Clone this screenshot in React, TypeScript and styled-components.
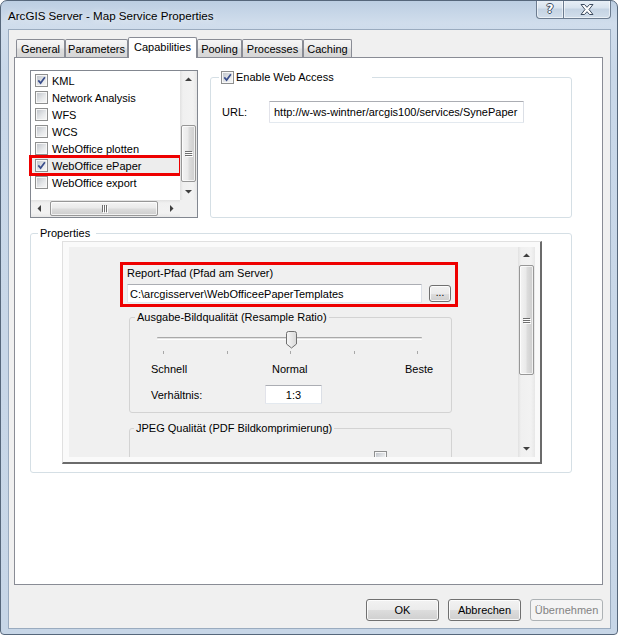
import React from 'react';
import styled, { createGlobalStyle, css } from 'styled-components';

type Dir = 'v' | 'h';

const GlobalStyle = createGlobalStyle`
  *, *::before, *::after { box-sizing: border-box; }
  html, body { margin: 0; padding: 0; background: #fff; }
  body {
    font-family: "Liberation Sans", Arial, sans-serif;
    font-size: 11px;
    color: #000;
  }
`;

const Window = styled.div`
  width: 618px;
  height: 635px;
  display: flex;
  flex-direction: column;
  border: 1px solid #56677b;
  border-radius: 7px 7px 4px 4px;
  background: linear-gradient(180deg, #bccee2 0px, #d0ddec 22px, #c9d8e9 70px, #c7d6e7 100%);
  overflow: hidden;
`;

const TitleBar = styled.div`
  height: 28px;
  flex: none;
  display: flex;
  align-items: flex-start;
  padding: 0 6px 0 7px;
`;

const Title = styled.div`
  flex: 1;
  align-self: center;
  font-size: 11.6px;
  color: #000;
  text-shadow: 0 0 6px rgba(255, 255, 255, 0.9);
`;

const CaptionButton = styled.div<{ $kind: 'help' | 'close' }>`
  height: 19px;
  margin-top: -1px;
  width: ${({ $kind }) => ($kind === 'help' ? 28 : 48)}px;
  margin-left: ${({ $kind }) => ($kind === 'close' ? -1 : 0)}px;
  border: 1px solid #6c7c90;
  border-top: none;
  border-radius: ${({ $kind }) => ($kind === 'help' ? '0 0 0 4px' : '0 0 4px 0')};
  background: linear-gradient(180deg, #e9f0f7 0%, #d8e3ee 45%, #c4d3e3 50%, #d2deeb 100%);
  box-shadow: inset 0 0 0 1px rgba(255, 255, 255, 0.55);
  display: flex;
  align-items: center;
  justify-content: center;
  font-family: "DejaVu Sans", sans-serif;
  font-weight: bold;
  font-size: 12px;
  color: #fff;
  text-shadow: 1px 0 0 #3e4c60, -1px 0 0 #3e4c60, 0 1px 0 #3e4c60, 0 -1px 0 #3e4c60;
`;

const Client = styled.div`
  flex: 1;
  margin: 0 6px 5px 7px;
  border: 1px solid #9aabbf;
  background: #f0f0f0;
  display: flex;
  flex-direction: column;
  padding: 7px 7px 0 5px;
`;

const TabStrip = styled.div`
  height: 20px;
  flex: none;
  display: flex;
  align-items: flex-end;
  padding-left: 2px;
  position: relative;
  z-index: 1;
`;

const Tab = styled.div<{ $active?: boolean; $w: number }>`
  width: ${({ $w }) => $w}px;
  height: ${({ $active }) => ($active ? 21 : 18)}px;
  margin-bottom: ${({ $active }) => ($active ? -1 : 0)}px;
  padding-bottom: ${({ $active }) => ($active ? 3 : 0)}px;
  border: 1px solid #898c95;
  border-bottom: none;
  border-radius: 2px 2px 0 0;
  background: ${({ $active }) =>
    $active ? '#fff' : 'linear-gradient(180deg, #f6f6f6 0%, #ececec 45%, #dedede 55%, #d6d6d6 100%)'};
  display: flex;
  align-items: center;
  justify-content: center;
  white-space: nowrap;
`;

const TabPage = styled.div`
  height: 528px;
  flex: none;
  border: 1px solid #898c95;
  background: #fff;
  padding: 12px 0 0 15px;
`;

const TopRow = styled.div`
  display: flex;
  gap: 12px;
  height: 148px;
`;

const ListBox = styled.div`
  width: 168px;
  border: 1px solid #828790;
  background: #fff;
  display: grid;
  grid-template-columns: 1fr 17px;
  grid-template-rows: 1fr 17px;
`;

const ListItems = styled.div`
  padding-top: 1px;
`;

const ListRow = styled.div<{ $marked?: boolean }>`
  height: 17px;
  display: flex;
  align-items: center;
  gap: 4px;
  padding-left: 4px;
  white-space: nowrap;
  ${({ $marked }) =>
    $marked &&
    css`
      background: #ededed;
      outline: 3px solid #ee0000;
      outline-offset: -1px;
    `}
`;

const Corner = styled.div`
  background: #f0f0f0;
`;

const BoxOuter = styled.span`
  width: 13px;
  height: 13px;
  flex: none;
  border: 1px solid #8e8f8f;
  padding: 1px;
  background: linear-gradient(135deg, #c2c6cc 0%, #e6e8ea 60%, #f5f5f5 100%) content-box, #f7f7f7;
  display: inline-flex;
  align-items: center;
  justify-content: center;

  svg {
    display: block;
  }
`;

const Group = styled.fieldset<{ $w?: number; $h?: number; $dim?: boolean }>`
  margin: 0;
  padding: 0;
  min-width: 0;
  border: 1px solid ${({ $dim }) => ($dim ? '#d3d3d3' : '#d5dfe5')};
  border-radius: 3px;
  ${({ $w }) => $w !== undefined && css`width: ${$w}px;`}
  ${({ $h }) => $h !== undefined && css`height: ${$h}px;`}
`;

const PropsGroup = styled(Group)`
  margin-top: 8px;
`;

const Legend = styled.legend<{ $ml: number; $pr?: number }>`
  margin-left: ${({ $ml }) => $ml}px;
  padding: 0 ${({ $pr }) => $pr ?? 2}px 0 2px;
  height: 14px;
  line-height: 14px;
  font-size: 11px;
  white-space: nowrap;
`;

const LegendInner = styled.span`
  display: inline-flex;
  align-items: center;
  gap: 2px;
  height: 14px;
`;

const WebBody = styled.div`
  padding: 17px 0 0 11px;
  display: flex;
  align-items: center;
`;

const FieldLabel = styled.span<{ $w: number }>`
  width: ${({ $w }) => $w}px;
  flex: none;
  white-space: nowrap;
`;

const TextBox = styled.div<{ $w: number; $h: number; $pl?: number; $center?: boolean }>`
  width: ${({ $w }) => $w}px;
  height: ${({ $h }) => $h}px;
  flex: none;
  border: 1px solid;
  border-color: #abadb3 #dbdfe6 #e3e9ef #e2e3ea;
  border-radius: 1px;
  background: #fff;
  display: flex;
  align-items: center;
  justify-content: ${({ $center }) => ($center ? 'center' : 'flex-start')};
  padding-left: ${({ $pl }) => $pl ?? 0}px;
  white-space: nowrap;
  overflow: hidden;
`;

const PropsGroupBody = styled.div`
  padding: 1px 0 0 31px;
`;

const Panel = styled.div`
  width: 480px;
  height: 223px;
  border-top: 1px solid #e0e0e0;
  border-left: 1px solid #e0e0e0;
  border-right: 2px solid #6b6b6b;
  border-bottom: 2px solid #6b6b6b;
  background: #fafafa;
  padding: 5px 5px 5px 6px;
  display: flex;
`;

const Viewport = styled.div`
  flex: 1;
  display: flex;
  background: #f0f0f0;
  overflow: hidden;
`;

const PanelContent = styled.div`
  flex: 1;
  display: flex;
  flex-direction: column;
  align-items: flex-start;
  padding-top: 15px;
  overflow: hidden;
`;

const ReportBox = styled.div`
  margin-left: 51px;
  width: 338px;
  border: 3px solid #ee0000;
  padding: 1px 0 1px 4px;
`;

const LabelLine = styled.div`
  height: 14px;
  line-height: 14px;
  white-space: nowrap;
`;

const PathRow = styled.div`
  margin-top: 4px;
  display: flex;
  align-items: center;
`;

const Button = styled.div<{ $w: number; $h: number; $disabled?: boolean }>`
  width: ${({ $w }) => $w}px;
  height: ${({ $h }) => $h}px;
  flex: none;
  border: 1px solid ${({ $disabled }) => ($disabled ? '#adb2b5' : '#707070')};
  border-radius: 3px;
  background: ${({ $disabled }) =>
    $disabled ? '#f4f4f4' : 'linear-gradient(180deg, #f2f2f2 0%, #ebebeb 50%, #dddddd 51%, #cfcfcf 100%)'};
  box-shadow: inset 0 0 0 1px ${({ $disabled }) => ($disabled ? '#f4f4f4' : 'rgba(255,255,255,0.8)')};
  color: ${({ $disabled }) => ($disabled ? '#838383' : '#000')};
  display: flex;
  align-items: center;
  justify-content: center;
  white-space: nowrap;
`;

const BrowseButton = styled(Button)`
  margin-left: 7px;
  font-size: 10px;
  padding-bottom: 2px;
`;

const InnerGroup = styled(Group)<{ $mt: number }>`
  margin-left: 60px;
  margin-top: ${({ $mt }) => $mt}px;
  flex: none;
`;

const QualityBody = styled.div`
  padding: 7px 0 8px 0;
`;

const Slider = styled.div`
  position: relative;
  margin-left: 27px;
  width: 265px;
  height: 24px;
  padding-top: 6px;
`;

const Track = styled.div`
  height: 3px;
  border-top: 1px solid #a9a9a9;
  border-bottom: 1px solid #fff;
  background: #e3e3e3;
  border-radius: 1px;
`;

const Ticks = styled.div`
  margin-top: 11px;
  display: flex;
  justify-content: space-between;
  padding: 0 4px 0 6px;
`;

const Tick = styled.span`
  width: 1px;
  height: 3px;
  background: #a8a8a8;
`;

const SliderThumb = styled.svg`
  position: absolute;
  left: 129px;
  top: 0;
`;

const ScaleRow = styled.div`
  margin-top: 7px;
  padding-left: 21px;
  display: flex;
  height: 14px;
  line-height: 14px;
`;

const ScaleLabel = styled.span<{ $w?: number }>`
  ${({ $w }) => $w !== undefined && css`width: ${$w}px;`}
  flex: none;
`;

const RatioRow = styled.div`
  margin-top: 9px;
  padding-left: 21px;
  display: flex;
  align-items: center;
`;

const JpegBody = styled.div`
  padding: 16px 0 0 244px;
`;

const ScrollBar = styled.div<{ $dir: Dir }>`
  display: flex;
  flex: none;
  flex-direction: ${({ $dir }) => ($dir === 'v' ? 'column' : 'row')};
  ${({ $dir }) => ($dir === 'v' ? css`width: 17px;` : css`height: 17px;`)}
  background: linear-gradient(
    ${({ $dir }) => ($dir === 'v' ? '90deg' : '180deg')},
    #e1e1e1 0px,
    #f0f0f0 3px,
    #f2f2f2 13px,
    #e7e7e7 17px
  );
`;

const ArrowCell = styled.div`
  width: 17px;
  height: 17px;
  flex: none;
  display: flex;
  align-items: center;
  justify-content: center;
`;

const ScrollFill = styled.div`
  flex: 1;
  display: flex;
  flex-direction: inherit;
`;

const ScrollThumb = styled.div<{ $dir: Dir; $offset: number; $len: number }>`
  flex: none;
  ${({ $dir, $offset, $len }) =>
    $dir === 'v'
      ? css`
          margin-top: ${$offset}px;
          height: ${$len}px;
          width: 15px;
          margin-left: 1px;
        `
      : css`
          margin-left: ${$offset}px;
          width: ${$len}px;
          height: 15px;
          margin-top: 1px;
        `}
  border: 1px solid #979797;
  border-radius: 2px;
  background: linear-gradient(
    ${({ $dir }) => ($dir === 'v' ? '90deg' : '180deg')},
    #f4f4f4 0%,
    #eaeaea 45%,
    #dcdcdc 55%,
    #cdcdcd 100%
  );
  box-shadow: inset 0 0 0 1px rgba(255, 255, 255, 0.7);
  display: flex;
  align-items: center;
  justify-content: center;
`;

const Grip = styled.div<{ $dir: Dir }>`
  display: flex;
  flex-direction: ${({ $dir }) => ($dir === 'v' ? 'column' : 'row')};
  gap: 1px;

  i {
    display: block;
    width: ${({ $dir }) => ($dir === 'v' ? 7 : 1)}px;
    height: ${({ $dir }) => ($dir === 'v' ? 1 : 7)}px;
    background: #6e6e6e;
    box-shadow: 1px 1px 0 #fff;
  }
`;

const ButtonRow = styled.div`
  margin-top: 14px;
  display: flex;
  justify-content: flex-end;
  gap: 9px;
`;

function Arrow({ rot }: { rot: number }) {
  return (
    <svg width="7" height="7" viewBox="0 0 7 7" style={{ transform: `rotate(${rot}deg)` }}>
      <polygon points="0,5 3.5,1.5 7,5" fill="#3f3f3f" />
    </svg>
  );
}

function Scroll({ dir, offset, len }: { dir: Dir; offset: number; len: number }) {
  const first = dir === 'v' ? 0 : -90;
  const last = dir === 'v' ? 180 : 90;
  return (
    <ScrollBar $dir={dir}>
      <ArrowCell>
        <Arrow rot={first} />
      </ArrowCell>
      <ScrollFill>
        <ScrollThumb $dir={dir} $offset={offset} $len={len}>
          <Grip $dir={dir}>
            <i />
            <i />
            <i />
          </Grip>
        </ScrollThumb>
      </ScrollFill>
      <ArrowCell>
        <Arrow rot={last} />
      </ArrowCell>
    </ScrollBar>
  );
}

function Check({ checked }: { checked?: boolean }) {
  return (
    <BoxOuter>
      {checked && (
        <svg width="9" height="9" viewBox="0 0 9 9">
          <path d="M1.3 4.4 L3.6 7.1 L7.9 1.3" fill="none" stroke="#3a4e8c" strokeWidth="1.7" />
        </svg>
      )}
    </BoxOuter>
  );
}

const capabilities = [
  { label: 'KML', checked: true },
  { label: 'Network Analysis' },
  { label: 'WFS' },
  { label: 'WCS' },
  { label: 'WebOffice plotten' },
  { label: 'WebOffice ePaper', checked: true, marked: true },
  { label: 'WebOffice export' },
];

const tabs = [
  { label: 'General', w: 49 },
  { label: 'Parameters', w: 63 },
  { label: 'Capabilities', w: 69, active: true },
  { label: 'Pooling', w: 45 },
  { label: 'Processes', w: 61 },
  { label: 'Caching', w: 49 },
];

export default function App() {
  return (
    <>
      <GlobalStyle />
      <Window>
        <TitleBar>
          <Title>ArcGIS Server - Map Service Properties</Title>
          <CaptionButton $kind="help">?</CaptionButton>
          <CaptionButton $kind="close">
            <svg width="14" height="11" viewBox="0 0 14 11">
              <polygon
                points="1,0.5 4.5,0.5 7,3.3 9.5,0.5 13,0.5 9,5.5 13,10.5 9.5,10.5 7,7.7 4.5,10.5 1,10.5 5,5.5"
                fill="#fff"
                stroke="#3e4c60"
                strokeWidth="1"
                strokeLinejoin="round"
              />
            </svg>
          </CaptionButton>
        </TitleBar>

        <Client>
          <TabStrip>
            {tabs.map(t => (
              <Tab key={t.label} $w={t.w} $active={t.active}>
                {t.label}
              </Tab>
            ))}
          </TabStrip>

          <TabPage>
            <TopRow>
              <ListBox>
                <ListItems>
                  {capabilities.map(c => (
                    <ListRow key={c.label} $marked={c.marked}>
                      <Check checked={c.checked} />
                      {c.label}
                    </ListRow>
                  ))}
                </ListItems>
                <Scroll dir="v" offset={37} len={57} />
                <Scroll dir="h" offset={2} len={108} />
                <Corner />
              </ListBox>

              <Group $w={362}>
                <Legend $ml={8} $pr={38}>
                  <LegendInner>
                    <Check checked />
                    Enable Web Access
                  </LegendInner>
                </Legend>
                <WebBody>
                  <FieldLabel $w={47}>URL:</FieldLabel>
                  <TextBox $w={255} $h={22} $pl={4}>
                    http://w-ws-wintner/arcgis100/services/SynePaper
                  </TextBox>
                </WebBody>
              </Group>
            </TopRow>

            <PropsGroup $w={542} $h={247}>
              <Legend $ml={7} $pr={6}>
                Properties
              </Legend>
              <PropsGroupBody>
                <Panel>
                  <Viewport>
                    <PanelContent>
                      <ReportBox>
                        <LabelLine>Report-Pfad (Pfad am Server)</LabelLine>
                        <PathRow>
                          <TextBox $w={295} $h={19} $pl={2}>
                            C:\arcgisserver\WebOfficeePaperTemplates
                          </TextBox>
                          <BrowseButton $w={22} $h={17}>
                            ...
                          </BrowseButton>
                        </PathRow>
                      </ReportBox>

                      <InnerGroup $w={323} $mt={3} $dim>
                        <Legend $ml={5}>Ausgabe-Bildqualität (Resample Ratio)</Legend>
                        <QualityBody>
                          <Slider>
                            <Track />
                            <Ticks>
                              <Tick />
                              <Tick />
                              <Tick />
                              <Tick />
                              <Tick />
                            </Ticks>
                            <SliderThumb width="11" height="18" viewBox="0 0 11 18">
                              <defs>
                                <linearGradient id="thumbFill" x1="0" y1="0" x2="1" y2="0">
                                  <stop offset="0" stopColor="#f7f7f7" />
                                  <stop offset="1" stopColor="#d9d9d9" />
                                </linearGradient>
                              </defs>
                              <path
                                d="M0.5 2.5 Q0.5 0.5 2.5 0.5 H8.5 Q10.5 0.5 10.5 2.5 V13 L5.5 17 L0.5 13 Z"
                                fill="url(#thumbFill)"
                                stroke="#707070"
                              />
                            </SliderThumb>
                          </Slider>
                          <ScaleRow>
                            <ScaleLabel $w={121}>Schnell</ScaleLabel>
                            <ScaleLabel $w={133}>Normal</ScaleLabel>
                            <ScaleLabel>Beste</ScaleLabel>
                          </ScaleRow>
                          <RatioRow>
                            <FieldLabel $w={114}>Verhältnis:</FieldLabel>
                            <TextBox $w={57} $h={19} $center>
                              1:3
                            </TextBox>
                          </RatioRow>
                        </QualityBody>
                      </InnerGroup>

                      <InnerGroup $w={323} $h={80} $mt={8} $dim>
                        <Legend $ml={4}>JPEG Qualität (PDF Bildkomprimierung)</Legend>
                        <JpegBody>
                          <Check />
                        </JpegBody>
                      </InnerGroup>
                    </PanelContent>
                    <Scroll dir="v" offset={1} len={110} />
                  </Viewport>
                </Panel>
              </PropsGroupBody>
            </PropsGroup>
          </TabPage>

          <ButtonRow>
            <Button $w={73} $h={22}>
              OK
            </Button>
            <Button $w={73} $h={22}>
              Abbrechen
            </Button>
            <Button $w={73} $h={22} $disabled>
              Übernehmen
            </Button>
          </ButtonRow>
        </Client>
      </Window>
    </>
  );
}
